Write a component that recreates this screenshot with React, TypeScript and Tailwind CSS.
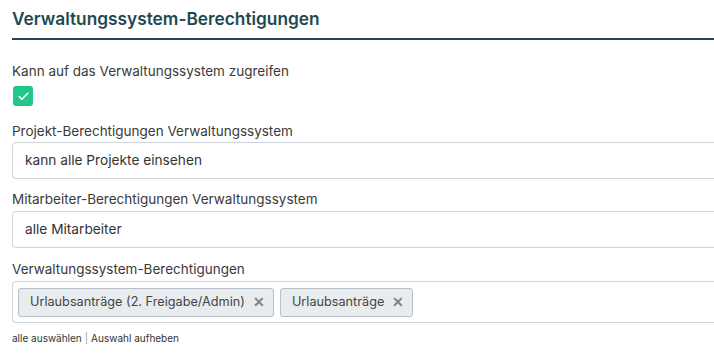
import { Check } from 'lucide-react';

const font = { fontFamily: 'Inter, "Noto Sans", sans-serif' };

function Tag({ label }: { label: string }) {
    return (
        <span className="flex h-[29px] items-center gap-[8px] rounded-[3px] border border-[#b8bfc6] bg-[#e9ecef] pl-[11px] pr-[8px] text-[12.7px] text-[#444]">
            {label}
            <span className="text-[14px] font-bold leading-none text-[#7d848b]">✕</span>
        </span>
    );
}

export default function App() {
    return (
        <div className="h-[357px] w-[714px] overflow-hidden bg-white" style={font}>
            <div className="w-[820px] pl-3">
                {/* Header */}
                <h2 className="border-b-2 border-[#1f4950] pb-[9px] pt-[9px] text-[17.3px] font-semibold leading-[20px] text-[#1f4950]">
                    Verwaltungssystem-Berechtigungen
                </h2>

                <div className="mt-[22px] text-[13.5px] leading-[18px] text-[#3a3a3a]">
                    Kann auf das Verwaltungssystem zugreifen
                </div>
                <div className="ml-px mt-[6px] flex h-[20px] w-[20px] items-center justify-center rounded-[3px] bg-[#22c68b]">
                    <Check size={13} strokeWidth={3} color="white" />
                </div>

                <div className="mt-[16px] text-[13.5px] leading-[18px] text-[#3a3a3a]">
                    Projekt-Berechtigungen Verwaltungssystem
                </div>
                <div className="mt-[2px] flex h-[37px] items-center rounded-[4px] border border-[#ced4da] px-3 text-[13.7px] text-[#333]">
                    kann alle Projekte einsehen
                </div>

                <div className="mt-[11px] text-[13.5px] leading-[18px] text-[#3a3a3a]">
                    Mitarbeiter-Berechtigungen Verwaltungssystem
                </div>
                <div className="mt-[3px] flex h-[37px] items-center rounded-[4px] border border-[#ced4da] px-3 text-[13.7px] text-[#333]">
                    alle Mitarbeiter
                </div>

                <div className="mt-[12px] text-[13.5px] leading-[18px] text-[#3a3a3a]">
                    Verwaltungssystem-Berechtigungen
                </div>
                <div className="mt-[3px] flex h-[42px] items-center gap-[6px] rounded-[4px] border border-[#ced4da] px-[5px]">
                    <Tag label="Urlaubsanträge (2. Freigabe/Admin)" />
                    <Tag label="Urlaubsanträge" />
                </div>

                <div className="mt-[8px] flex items-center gap-[3px] text-[10px] text-[#333]">
                    <span>alle auswählen</span>
                    <span className="text-[#999]">|</span>
                    <span>Auswahl aufheben</span>
                </div>
            </div>
        </div>
    );
}
